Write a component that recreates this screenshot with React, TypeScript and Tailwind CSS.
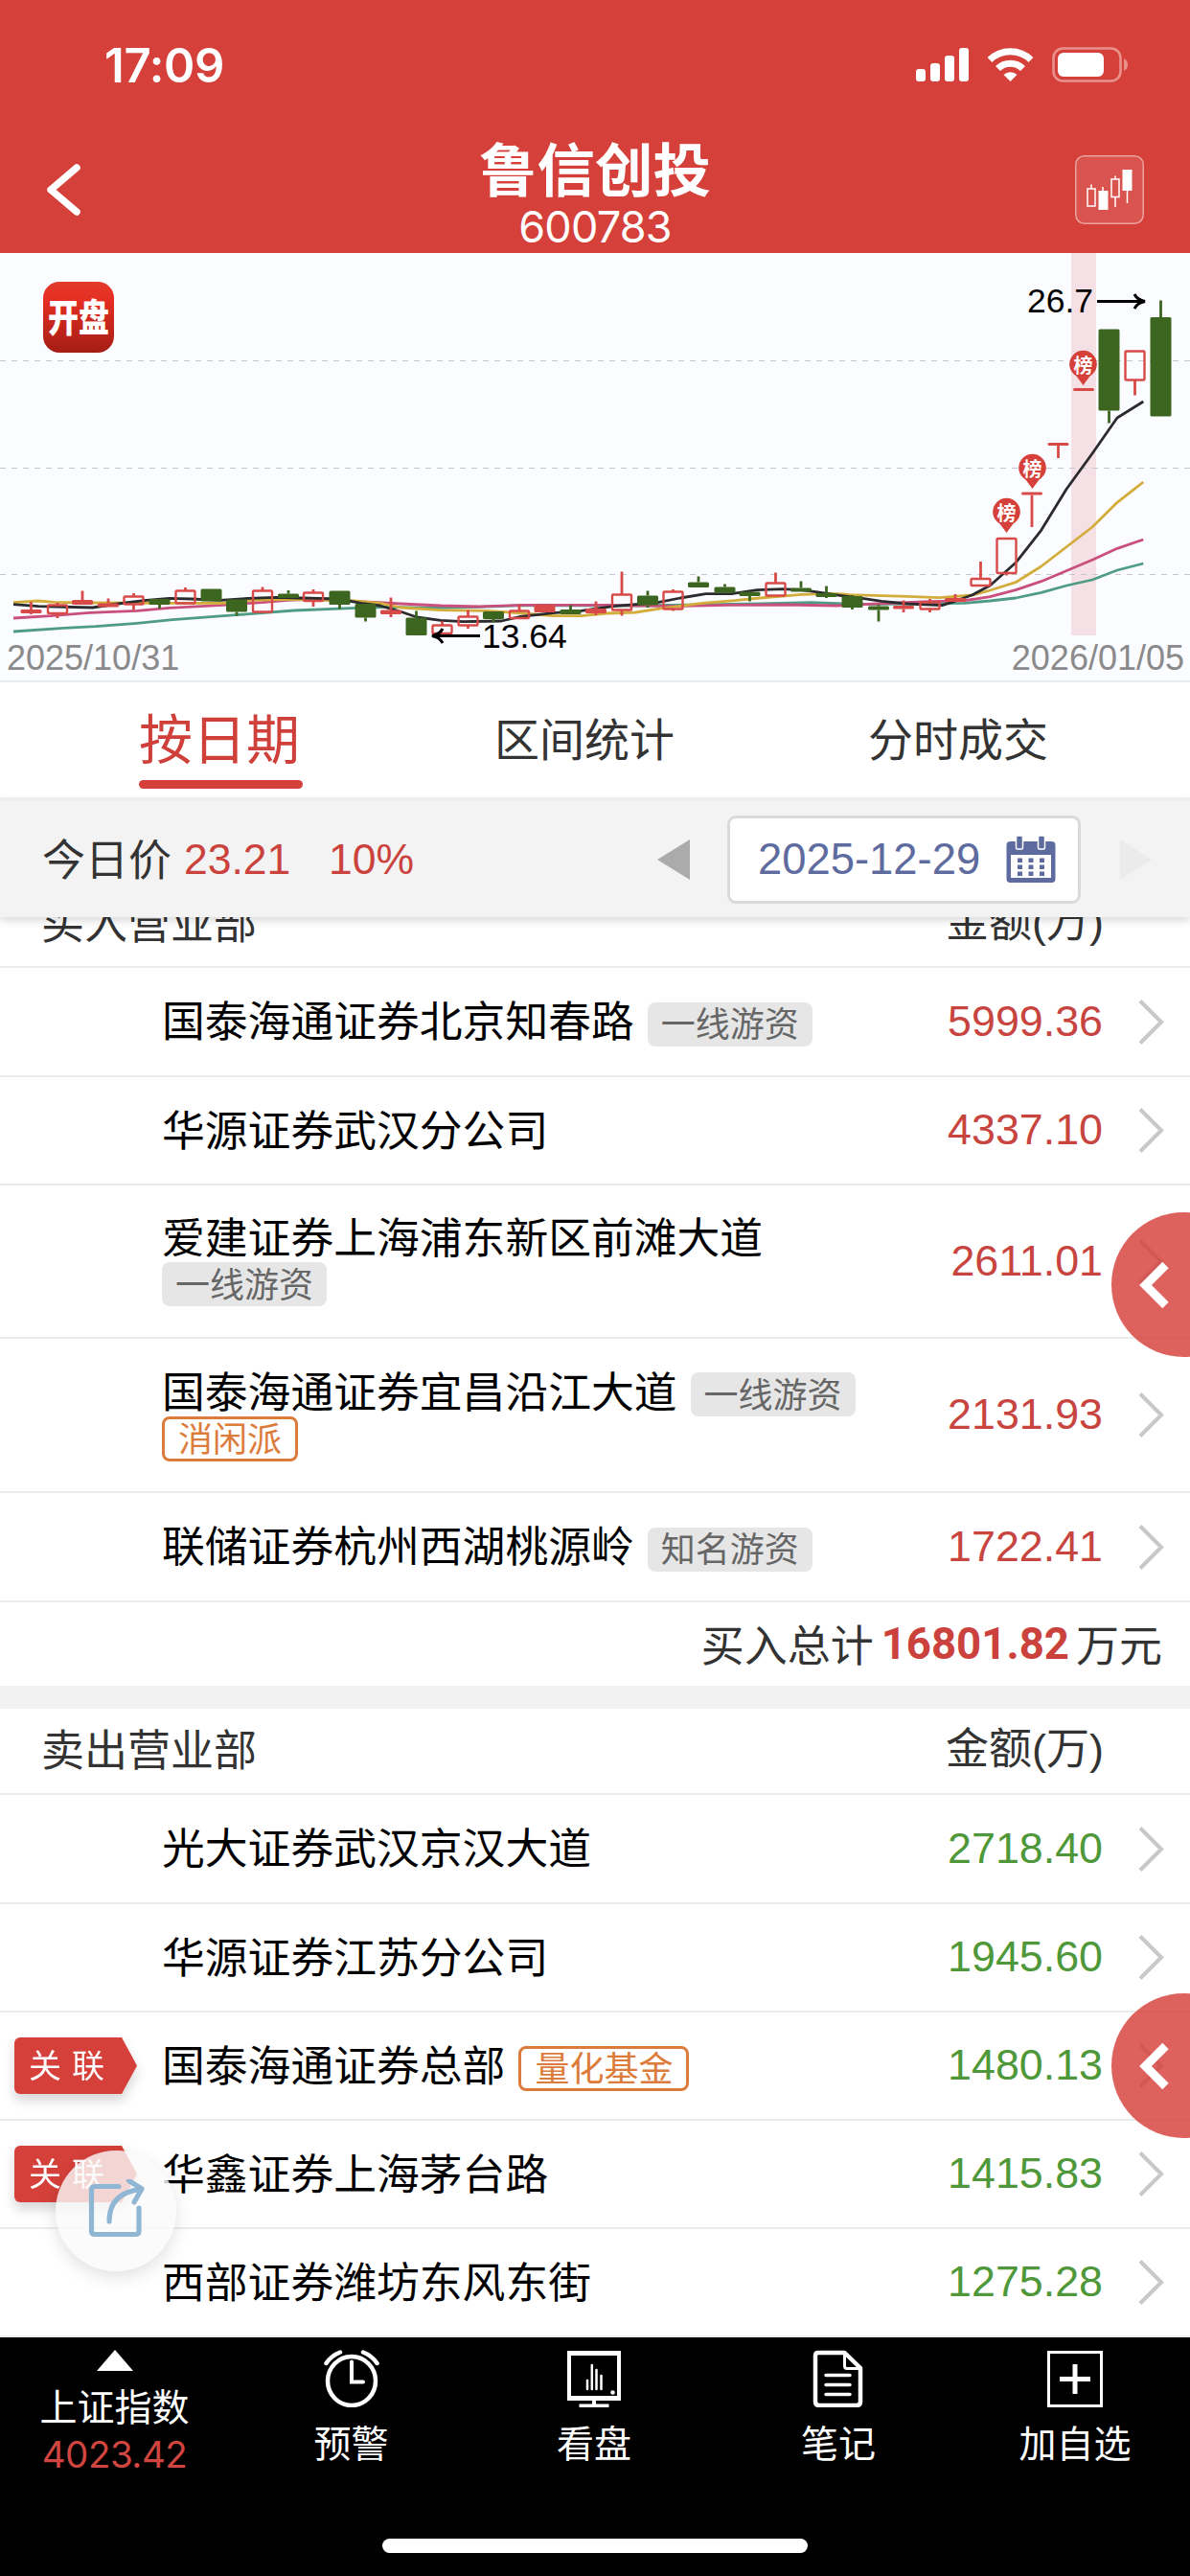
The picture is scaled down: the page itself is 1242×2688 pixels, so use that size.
import React from "react";

type Candle = {
  x: number;
  top: number;
  bottom: number;
  high?: number;
  low?: number;
  kind: "hollow" | "red" | "green";
};

const candles: Candle[] = [
  { x: 32.5, top: 636, bottom: 640, high: 628, low: 641, kind: "red" },
  { x: 60, top: 631.5, bottom: 640, high: 629, low: 645, kind: "hollow" },
  { x: 86, top: 626, bottom: 631, high: 616.5, kind: "red" },
  { x: 113, top: 629.5, bottom: 633.5, high: 624.5, kind: "red" },
  { x: 139.5, top: 622.5, bottom: 630.5, high: 619, low: 636.5, kind: "hollow" },
  { x: 166.5, top: 625, bottom: 631, low: 635, kind: "green" },
  { x: 193.5, top: 616.5, bottom: 629.5, high: 613, kind: "hollow" },
  { x: 220.5, top: 614.5, bottom: 627.5, kind: "green" },
  { x: 247, top: 625.5, bottom: 638.5, low: 642.5, kind: "green" },
  { x: 274, top: 616.5, bottom: 638.5, high: 612.5, kind: "hollow" },
  { x: 301, top: 619.5, bottom: 624, high: 616, kind: "green" },
  { x: 327, top: 618.5, bottom: 627, high: 615, low: 633, kind: "hollow" },
  { x: 354.5, top: 616.5, bottom: 631, low: 635.5, kind: "green" },
  { x: 381.5, top: 630, bottom: 644.5, low: 648.5, kind: "green" },
  { x: 408, top: 636.5, bottom: 641, high: 623.5, low: 644, kind: "red" },
  { x: 434.5, top: 644.5, bottom: 663, high: 637.5, kind: "green" },
  { x: 461.5, top: 652.5, bottom: 661, high: 648.5, kind: "hollow" },
  { x: 488.5, top: 643.5, bottom: 652.5, high: 636.5, low: 656, kind: "hollow" },
  { x: 515, top: 638, bottom: 646, low: 649.5, kind: "green" },
  { x: 542, top: 637.5, bottom: 645, high: 630.5, kind: "hollow" },
  { x: 568.5, top: 631, bottom: 639, kind: "red" },
  { x: 595.5, top: 636, bottom: 641, high: 631.5, kind: "green" },
  { x: 622, top: 635, bottom: 640, high: 627.5, low: 642, kind: "red" },
  { x: 649, top: 620.5, bottom: 636.5, high: 596.5, low: 642.5, kind: "hollow" },
  { x: 676, top: 621.5, bottom: 631.5, high: 616.5, low: 634, kind: "green" },
  { x: 702.5, top: 617.5, bottom: 635.5, high: 615, low: 637.5, kind: "hollow" },
  { x: 729, top: 607.5, bottom: 613, high: 601.5, kind: "green" },
  { x: 756.5, top: 612.5, bottom: 618.5, high: 609.5, kind: "green" },
  { x: 782.5, top: 617.5, bottom: 622, low: 627.5, kind: "green" },
  { x: 809.5, top: 608.5, bottom: 621.5, high: 597.5, kind: "hollow" },
  { x: 836, top: 613.5, bottom: 617.5, high: 606.5, kind: "green" },
  { x: 862.5, top: 619, bottom: 623, high: 611.5, low: 624, kind: "green" },
  { x: 889.5, top: 622, bottom: 634, high: 621, low: 636, kind: "green" },
  { x: 917, top: 632.5, bottom: 636.5, high: 631, low: 648.5, kind: "green" },
  { x: 943, top: 632, bottom: 635.5, high: 626.5, low: 639, kind: "red" },
  { x: 970.5, top: 628.5, bottom: 635.5, high: 625, low: 639, kind: "hollow" },
  { x: 997, top: 624, bottom: 628, high: 620, kind: "red" },
  { x: 1023.5, top: 604, bottom: 611, high: 586, kind: "hollow" },
  { x: 1050.5, top: 562, bottom: 598, low: 600.5, kind: "hollow" },
  { x: 1077, top: 513.5, bottom: 516.5, low: 550, kind: "red" },
  { x: 1104.5, top: 462, bottom: 465, low: 478, kind: "red" },
  { x: 1131, top: 405, bottom: 408, kind: "red" },
  { x: 1157.5, top: 343.5, bottom: 428.5, low: 441.5, kind: "green" },
  { x: 1184.5, top: 366.5, bottom: 396.5, low: 412.5, kind: "hollow" },
  { x: 1211.5, top: 331, bottom: 434.5, high: 313.5, kind: "green" },
];

// Averages are stored in third-of-a-pixel steps, relative to an origin.
const trace = (ox: number, oy: number, pts: number[][]) =>
  pts.map(([x, y]) => `${(ox + x / 3).toFixed(1)},${(oy + y / 3).toFixed(1)}`).join(" ");

const averages = [
  {
    color: "#4f9c84",
    points: [
      trace(0, 260, [[42,1197],[200,1186],[300,1181],[430,1171],[540,1160],[740,1145],[920,1131],[1100,1124],[1190,1121]]),
      trace(400, 560, [[0,220],[180,223],[300,220],[440,215],[800,216],[1000,213],[1180,210],[1340,206],[1440,210]]),
      trace(880, 260, [[60,1112],[200,1110],[380,1108],[460,1101],[540,1092],[620,1075],[700,1053],[780,1035],[858,1005],[940,984]]),
    ].join(" "),
  },
  {
    color: "#c9507c",
    points: [
      trace(0, 260, [[42,1155],[160,1148],[280,1138],[430,1132],[530,1123],[700,1114],[820,1106],[900,1099],[980,1096],[1120,1103],[1200,1107]]),
      trace(400, 560, [[55,210],[180,216],[300,219],[440,214],[700,214],[900,218],[1080,214],[1260,213],[1420,216]]),
      trace(880, 260, [[60,1112],[250,1104],[380,1100],[460,1088],[540,1067],[620,1040],[780,973],[858,937],[940,909]]),
    ].join(" "),
  },
  {
    color: "#d3ad3c",
    points: [
      trace(0, 260, [[42,1106],[120,1101],[170,1105],[290,1107],[540,1108],[700,1108],[760,1100],[900,1096],[1100,1100],[1200,1110]]),
      trace(400, 560, [[55,222],[180,230],[320,232],[440,240],[530,248],[620,248],[700,240],[790,237],[860,226],[1000,208],[1100,200],[1180,192],[1310,181],[1400,178],[1440,180]]),
      trace(880, 260, [[20,1082],[200,1087],[300,1091],[405,1083],[460,1068],[540,1043],[620,993],[780,870],[858,793],[940,729]]),
    ].join(" "),
  },
  {
    color: "#2b2b2d",
    points: [
      trace(0, 260, [[42,1112],[120,1118],[290,1122],[370,1110],[450,1100],[530,1093],[600,1095],[690,1099],[780,1093],[860,1090],[940,1092],[1060,1095],[1130,1108],[1190,1116]]),
      trace(400, 560, [[55,235],[105,252],[180,262],[250,266],[370,264],[430,250],[540,238],[620,232],[720,218],[860,206],[930,192],[1010,179],[1090,179],[1170,167],[1250,164],[1310,167],[1350,172],[1430,184]]),
      trace(880, 260, [[60,1093],[120,1102],[200,1110],[310,1115],[350,1102],[405,1082],[460,1053],[540,982],[620,880],[700,750],[780,640],[858,528],[940,477]]),
    ].join(" "),
  },
];

const pins = [
  { x: 1130.5, y: 381 },
  { x: 1077.5, y: 489 },
  { x: 1050.5, y: 535 },
];

function StatusBar() {
  return (
    <div className="flex h-[136px] items-center justify-between pl-[109px] pr-[64px]">
      <span className="font-['Inter',sans-serif] text-[49px] leading-none font-semibold tracking-[-0.3px]">17:09</span>
      <svg width="222" height="38" viewBox="957 49 222 38" fill="#fff">
        <rect x="957" y="72" width="10" height="13" rx="3" />
        <rect x="972" y="66" width="10" height="19" rx="3" />
        <rect x="987" y="58" width="10" height="27" rx="3" />
        <rect x="1002" y="50" width="10" height="35" rx="3" />
        <path d="M1055.500 85l-7-7a10.500 10.500 0 0 1 14 0z" />
        <path d="M1042.500 71.500a18.500 18.500 0 0 1 26 0" fill="none" stroke="#fff" strokeWidth="7" />
        <path d="M1034 62.500a31 31 0 0 1 43 0" fill="none" stroke="#fff" strokeWidth="7" />
        <rect x="1100.500" y="50.500" width="70" height="34" rx="10" fill="none" stroke="#e9918d" strokeWidth="2.600" />
        <rect x="1105" y="55" width="48" height="25" rx="6" />
        <path d="M1174 61q4 2 4 6.500t-4 6.500z" fill="#e9918d" />
      </svg>
    </div>
  );
}

function Header() {
  return (
    <header className="h-[264px] bg-[#d5403a] text-white">
      <StatusBar />
      <div className="flex h-[128px] items-start justify-between pr-[48px] pl-[47px]">
        <svg className="mt-[34px] mr-[36px]" width="37" height="56" viewBox="0 0 37 56">
          <path d="M33 5 L6 28 L33 51" fill="none" stroke="#fff" strokeWidth="7.5" strokeLinecap="round" strokeLinejoin="round" />
        </svg>
        <div className="flex flex-col items-center">
          <h1 className="mt-[6px] text-[60.5px] leading-[64px] font-bold">鲁信创投</h1>
          <div className="mt-[6px] font-['Inter',sans-serif] text-[45px] leading-[50px] font-normal tracking-[-0.8px]">600783</div>
        </div>
        <svg className="mt-[26px]" width="72" height="72" viewBox="0 0 72 72">
          <rect x="0.75" y="0.750" width="70.500" height="70.500" rx="9" fill="#da544f" stroke="#eba19e" strokeWidth="1.500" />
          <g fill="none" stroke="#fff" strokeWidth="1.500">
            <path d="M17 30.500v4M29 33v5M42 21.500v3M42 44v10M54.500 36v14" />
            <rect x="13" y="35" width="8" height="18" />
            <rect x="38" y="25" width="8" height="18.500" />
          </g>
          <rect x="24.500" y="37" width="10" height="20" fill="#fff" />
          <rect x="49.500" y="15" width="10" height="22" fill="#fff" />
        </svg>
      </div>
    </header>
  );
}

function CandleShape({ c }: { c: Candle }) {
  const color = c.kind === "green" ? "#3c6620" : "#d84a48";
  const hollow = c.kind === "hollow";
  return (
    <g stroke={color} fill={hollow ? "none" : color}>
      {c.high !== undefined && <line x1={c.x} x2={c.x} y1={c.high} y2={c.top} strokeWidth="2.8" />}
      {c.low !== undefined && <line x1={c.x} x2={c.x} y1={c.bottom} y2={c.low} strokeWidth="2.8" />}
      {hollow ? (
        <rect x={c.x - 10} y={c.top} width="20" height={c.bottom - c.top} rx="1" strokeWidth="2.4" />
      ) : (
        <rect x={c.x - 11} y={c.top} width="22" height={c.bottom - c.top} rx="1.5" stroke="none" />
      )}
    </g>
  );
}

function Chart() {
  return (
    <section className="h-[448px] border-b-2 border-[#e9eaee] bg-[#fbfcff]">
      <svg
        className="block font-['Liberation_Sans','Noto_Sans_CJK_SC',sans-serif]"
        width="1242"
        height="446"
        viewBox="0 264 1242 446"
      >
        <defs>
          <linearGradient id="logo" x1="0" y1="0" x2="0" y2="1">
            <stop offset="0" stopColor="#e23a2c" />
            <stop offset="0.25" stopColor="#e52f22" />
            <stop offset="1" stopColor="#a41d16" />
          </linearGradient>
        </defs>
        <rect x="1118" y="264" width="26" height="399" fill="#f5e0e6" />
        {[376.5, 488.5, 599.5].map((y) => (
          <line key={y} x1="0" x2="1242" y1={y} y2={y} stroke="#c6c7d0" strokeWidth="1.200" strokeDasharray="6 6" />
        ))}
        <rect x="45" y="294" width="74" height="74" rx="17" fill="url(#logo)" />
        <text transform="translate(82 346) scale(0.97 1.220)" textAnchor="middle" fontSize="33" fontWeight="900" fill="#fff">开盘</text>
        {averages.map((a) => (
          <polyline key={a.color} points={a.points} fill="none" stroke={a.color} strokeWidth="2.800" strokeLinejoin="round" />
        ))}
        {candles.map((c) => (
          <CandleShape key={c.x} c={c} />
        ))}
        {pins.map((p) => (
          <g key={p.x}>
            <path
              d={`M${p.x} ${p.y + 21} L${p.x - 7} ${p.y + 11.5} A14.300 14.300 0 1 1 ${p.x + 7} ${p.y + 11.5} Z`}
              fill="#d5403a"
            />
            <text x={p.x} y={p.y + 7.5} textAnchor="middle" fontSize="20" fontWeight="700" fill="#fff">榜</text>
          </g>
        ))}
        <text x="1072" y="326" fontSize="35.500">26.7</text>
        <path d="M1145 314.500h49M1184 307q3 6 11 7.500q-8 1.500-11 7.500" fill="none" stroke="#000" strokeWidth="3" />
        <path d="M501 663.500h-49M462 656q-3 6-11 7.500q8 1.500 11 7.500" fill="none" stroke="#000" strokeWidth="3" />
        <text x="503" y="676" fontSize="35.500">13.64</text>
        <text x="7" y="699" fontSize="36" fill="#8a8a8a">2025/10/31</text>
        <text x="1236" y="699" fontSize="36" fill="#8a8a8a" textAnchor="end">2026/01/05</text>
      </svg>
    </section>
  );
}

function Tabs() {
  return (
    <nav className="flex h-[120px] bg-white pl-[145px] text-[#333]">
      <div className="flex w-[171px] flex-col">
        <span className="mt-[26px] text-[56px] leading-[60px] text-[#d0403a]">按日期</span>
        <span className="mt-[16px] h-[9px] rounded-full bg-[#d5403a]" />
      </div>
      <span className="mt-[29px] ml-[200px] text-[47px] leading-[56px]">区间统计</span>
      <span className="mt-[29px] ml-[202px] text-[47px] leading-[56px]">分时成交</span>
    </nav>
  );
}

function CalendarIcon() {
  return (
    <svg width="52" height="50" viewBox="0 0 52 50">
      <rect x="0.500" y="6" width="51" height="43" rx="4" fill="#5d6b9f" />
      <rect x="5" y="20" width="42" height="24" fill="#fff" />
      <g stroke="#fff" strokeWidth="1.500" fill="#5d6b9f">
        <rect x="10.500" y="0" width="7" height="14" rx="1.500" />
        <rect x="33.500" y="0" width="7" height="14" rx="1.500" />
      </g>
      {[0, 1, 2].map((r) =>
        [0, 1, 2].map((c) => (
          <rect key={`${r}${c}`} x={12 + c * 11.5} y={23.5 + r * 7} width="5" height="4.500" fill="#5d6b9f" />
        )),
      )}
    </svg>
  );
}

function DateBar() {
  return (
    <div className="relative z-10 flex h-[125px] items-center border-t-4 border-[#ededed] bg-[#f3f3f3] pl-[44px] shadow-[0_4px_8px_rgba(0,0,0,0.14)]">
      <span className="w-[148px] pb-[4px] text-[45px] leading-none text-[#333]">今日价</span>
      <span className="w-[151px] pt-[2px] font-['Liberation_Sans',sans-serif] text-[44.5px] leading-none text-[#cb423d]">23.21</span>
      <span className="w-[343px] pt-[2px] font-['Liberation_Sans',sans-serif] text-[44.5px] leading-none text-[#cb423d]">10%</span>
      <svg width="34" height="42" viewBox="0 0 34 42">
        <path d="M34 0v42L0 21z" fill="#ababab" />
      </svg>
      <div className="ml-[39px] flex h-[92px] w-[369px] items-center rounded-[9px] border-[3px] border-[#dadada] bg-white pl-[29px]">
        <span className="w-[259px] font-['Liberation_Sans',sans-serif] text-[45.4px] leading-none text-[#5d6b9f]">2025-12-29</span>
        <CalendarIcon />
      </div>
      <svg className="ml-[41px]" width="33" height="42" viewBox="0 0 33 42">
        <path d="M0 0v42L33 21z" fill="#ebebeb" />
      </svg>
    </div>
  );
}

function SectionHeader({ title }: { title: string }) {
  return (
    <div className="flex h-[90px] shrink-0 items-center justify-between border-b-2 border-[#ececec] pr-[90px] pb-[7px] pl-[43px] text-[45px] leading-none text-[#333]">
      <span>{title}</span>
      <span>
        金额<span className="font-['Liberation_Sans',sans-serif]">(</span>万<span className="font-['Liberation_Sans',sans-serif]">)</span>
      </span>
    </div>
  );
}

function Tag({ text, tone }: { text: string; tone: "gray" | "orange" }) {
  return tone === "gray" ? (
    <span className="flex h-[46px] items-center rounded-[8px] bg-[#e6e6e6] px-[14px] pb-[5px] text-[36px] leading-none text-[#666]">
      {text}
    </span>
  ) : (
    <span className="flex h-[47px] items-center rounded-[8px] border-[3px] border-[#dc7c3c] px-[14px] pb-[5px] text-[36px] leading-none text-[#dc7c3c]">
      {text}
    </span>
  );
}

type RowProps = {
  name: string;
  amount: string;
  height: string;
  sell?: boolean;
  linked?: boolean;
  tag?: React.ReactNode;
  below?: React.ReactNode;
};

function Row({ name, amount, height, sell, linked, tag, below }: RowProps) {
  return (
    <div className={`flex items-center border-b-2 border-[#ececec] ${height}`}>
      <div className="w-[169px] pl-[15px]">
        {linked && (
          <div className="w-[128px] drop-shadow-[0_7px_6px_rgba(0,0,0,0.16)]">
            <div className="flex h-[59px] items-center rounded-l-[6px] bg-[#d5403a] pb-[4px] pl-[15px] text-[34px] leading-none tracking-[11px] text-white [clip-path:polygon(0_0,112px_0,128px_50%,112px_100%,0_100%)]">
              关联
            </div>
          </div>
        )}
      </div>
      <div className={`flex flex-1 flex-col ${below ? "h-full pt-[30px]" : ""}`}>
        <div className="flex items-center gap-[14px]">
          <span className="pb-[6px] text-[44.8px] leading-[44px] text-black">{name}</span>
          <span className="pt-[5px]">{tag}</span>
        </div>
        {below && <div className="flex">{below}</div>}
      </div>
      <span className={`pb-[2px] font-['Liberation_Sans',sans-serif] text-[44.8px] leading-none ${sell ? "text-[#4f9839]" : "text-[#c8443f]"}`}>
        {amount}
      </span>
      <svg className="mr-[27px] ml-[37px]" width="27" height="47" viewBox="0 0 27 47">
        <path d="M2 1.500L24 23.500L2 45.500" fill="none" stroke="#c8c8c8" strokeWidth="4" />
      </svg>
    </div>
  );
}

function SideButton({ place }: { place: string }) {
  return (
    <div className={`absolute right-0 h-[151px] w-[82px] overflow-hidden ${place}`}>
      <div className="flex h-[151px] w-[151px] items-center rounded-full bg-[#d5403a]/[0.82] pl-[27px]">
        <svg width="34" height="50" viewBox="0 0 34 50">
          <path d="M29.500 4L8.500 25L29.500 46" fill="none" stroke="#fff" strokeWidth="9" />
        </svg>
      </div>
    </div>
  );
}

function ShareButton() {
  return (
    <div className="absolute top-[2244px] left-[58px] flex h-[126px] w-[126px] items-center justify-center rounded-full bg-[#fafafa]/[0.8] shadow-[0_6px_18px_rgba(0,0,0,0.12)]">
      <svg width="62" height="66" viewBox="91 2274 62 66" fill="none" stroke="#8fb6d3" strokeWidth="5.200" strokeLinecap="round" strokeLinejoin="round">
        <path d="M125 2281.500H100q-3.500 0-3.500 3.500v43q0 3.500 3.500 3.500h42.500q3.500 0 3.500-3.500V2304" />
        <path d="M115 2318Q115 2288 148 2284.500" />
        <path d="M135.500 2275.500L149 2284L141 2298" />
      </svg>
    </div>
  );
}

function NavItem({ width, label, children }: { width: string; label: string; children: React.ReactNode }) {
  return (
    <div className={`flex flex-col items-center pt-[13px] ${width}`}>
      {children}
      <span className="mt-[15px] text-[39px] leading-[40px]">{label}</span>
    </div>
  );
}

function BottomNav() {
  return (
    <footer className="flex h-[249px] flex-col bg-black text-white">
      <div className="flex h-[210px]">
        <div className="flex w-[239px] flex-col items-center pt-[13px]">
          <svg width="38" height="22" viewBox="0 0 38 22">
            <path d="M19 0L38 22H0z" fill="#fff" />
          </svg>
          <span className="mt-[15px] text-[39px] leading-[40px]">上证指数</span>
          <span className="mt-[12px] font-['Inter',sans-serif] text-[38.5px] leading-[40px] font-normal tracking-[-0.5px] text-[#d0453f]">4023.42</span>
        </div>
        <NavItem width="w-[255px]" label="预警">
          <svg width="58" height="60" viewBox="0 0 58 60" fill="none" stroke="#fff" strokeLinecap="round">
            <ellipse cx="29" cy="32.500" rx="25" ry="25.500" strokeWidth="4.500" />
            <path d="M29 12.500V33.500H41" strokeWidth="4" />
            <path d="M2.500 14Q8 6 17 2.500M41 2.500Q50 6 55.500 14" strokeWidth="4.500" />
          </svg>
        </NavItem>
        <NavItem width="w-[252px]" label="看盘">
          <svg width="56" height="60" viewBox="0 0 56 60" fill="none" stroke="#fff">
            <path d="M2 3.500H54V51H2z" strokeWidth="4" />
            <path d="M0 50.500H56M0 3.500H56" strokeWidth="5" />
            <path d="M28 52V58M12.500 58.500H43.500" strokeWidth="4" />
            <path d="M21 32V41M25.800 16V41M30.500 21V41M35.500 27V41" strokeWidth="2.500" strokeLinecap="round" />
            <circle cx="47.500" cy="44.500" r="2.300" fill="#fff" stroke="none" />
          </svg>
        </NavItem>
        <NavItem width="w-[258px]" label="笔记">
          <svg width="54" height="60" viewBox="0 0 54 60" fill="none" stroke="#fff" strokeLinejoin="round" strokeLinecap="round">
            <path d="M6 3H33.500L50 19V54Q50 58 46 58H7Q3 58 3 54V6Q3 3 6 3z" strokeWidth="4.500" />
            <path d="M33.500 4V17Q33.500 19.500 36 19.500H49" strokeWidth="3" />
            <path d="M14 26.500H39M14 36.500H39M14 46.500H39" strokeWidth="3.500" />
          </svg>
        </NavItem>
        <NavItem width="w-[236px]" label="加自选">
          <svg width="58" height="60" viewBox="0 0 58 60" fill="none" stroke="#fff">
            <rect x="1.500" y="2.500" width="55" height="56" strokeWidth="3" />
            <path d="M29 15V46M13 30.500H45" strokeWidth="5" />
          </svg>
        </NavItem>
      </div>
      <div className="mx-auto h-[15px] w-[444px] rounded-full bg-white" />
    </footer>
  );
}

export default function App() {
  return (
    <div className="relative h-[2688px] w-[1242px] overflow-hidden bg-white font-['Noto_Sans_CJK_SC',sans-serif] text-black">
      <Header />
      <Chart />
      <Tabs />
      <DateBar />
      <div className="flex h-[53px] flex-col justify-end overflow-hidden">
        <SectionHeader title="买入营业部" />
      </div>
      <Row height="h-[114px]" name="国泰海通证券北京知春路" amount="5999.36" tag={<Tag tone="gray" text="一线游资" />} />
      <Row height="h-[113px]" name="华源证券武汉分公司" amount="4337.10" />
      <Row height="h-[160px]" name="爱建证券上海浦东新区前滩大道" amount="2611.01" below={<Tag tone="gray" text="一线游资" />} />
      <Row
        height="h-[161px]"
        name="国泰海通证券宜昌沿江大道"
        amount="2131.93"
        tag={<Tag tone="gray" text="一线游资" />}
        below={<Tag tone="orange" text="消闲派" />}
      />
      <Row height="h-[114px]" name="联储证券杭州西湖桃源岭" amount="1722.41" tag={<Tag tone="gray" text="知名游资" />} />
      <div className="flex h-[87px] items-center justify-end pr-[29px] text-[45px] leading-none text-[#333]">
        <span className="pb-[3px]">买入总计</span>
        <span className="mr-[7px] ml-[8px] font-['Roboto',sans-serif] text-[45.6px] font-bold text-[#cb423d]">16801.82</span>
        <span className="pb-[3px]">万元</span>
      </div>
      <div className="h-[24px] bg-[#f2f2f2]" />
      <SectionHeader title="卖出营业部" />
      <Row height="h-[114px]" sell name="光大证券武汉京汉大道" amount="2718.40" />
      <Row height="h-[113px]" sell name="华源证券江苏分公司" amount="1945.60" />
      <Row height="h-[113px]" sell linked name="国泰海通证券总部" amount="1480.13" tag={<Tag tone="orange" text="量化基金" />} />
      <Row height="h-[113px]" sell linked name="华鑫证券上海茅台路" amount="1415.83" />
      <Row height="h-[113px]" sell name="西部证券潍坊东风东街" amount="1275.28" />
      <BottomNav />
      <SideButton place="top-[1265px]" />
      <SideButton place="top-[2080px]" />
      <ShareButton />
    </div>
  );
}
